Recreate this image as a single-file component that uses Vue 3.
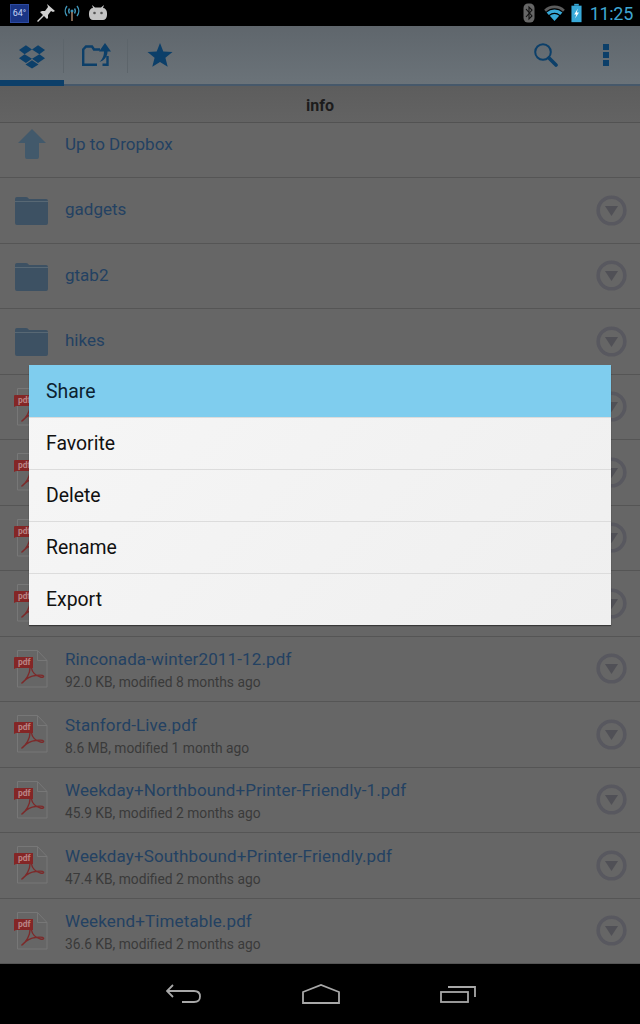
<script setup>
const folders = ['gadgets', 'gtab2', 'hikes']

// the first four pdf rows sit behind the menu, only their icon edge shows
const files = [
  { name: '', meta: '' },
  { name: '', meta: '' },
  { name: '', meta: '' },
  { name: '', meta: '' },
  { name: 'Rinconada-winter2011-12.pdf', meta: '92.0 KB, modified 8 months ago' },
  { name: 'Stanford-Live.pdf', meta: '8.6 MB, modified 1 month ago' },
  { name: 'Weekday+Northbound+Printer-Friendly-1.pdf', meta: '45.9 KB, modified 2 months ago' },
  { name: 'Weekday+Southbound+Printer-Friendly.pdf', meta: '47.4 KB, modified 2 months ago' },
  { name: 'Weekend+Timetable.pdf', meta: '36.6 KB, modified 2 months ago' }
]

const menu = ['Share', 'Favorite', 'Delete', 'Rename', 'Export']
</script>

<template>
  <div class="screen">
    <div class="status">
      <div class="temp">64°</div>
      <svg class="st-icon pin" width="20" height="20" viewBox="0 0 20 20">
        <path d="M11 1l8 7-2 1-2-1-3 4 0 3-1 1-3-3-6 6-1-1 6-6-3-3 2-1 3 0 3-4z" fill="#d0d0d0" />
      </svg>
      <svg class="st-icon" width="18" height="20" viewBox="0 0 18 20">
        <g fill="none" stroke="#3f93b5" stroke-width="1.4">
          <path d="M4 3a8 8 0 0 0 0 10" />
          <path d="M14 3a8 8 0 0 1 0 10" />
          <path d="M6.500 5.500a4.500 4.500 0 0 0 0 5" />
          <path d="M11.500 5.500a4.500 4.500 0 0 1 0 5" />
        </g>
        <circle cx="9" cy="8" r="1.500" fill="#3f93b5" />
        <path d="M9 9v9" stroke="#b08a70" stroke-width="1.400" />
      </svg>
      <svg class="st-icon" width="20" height="18" viewBox="0 0 20 18">
        <path d="M1 9c0-3 2-5 4-5L4 1l3 2.500h6L16 1l-1 3c2 0 4 2 4 5v2c0 3-2 5-4 5H5c-2 0-4-2-4-5z" fill="#c4c4c4" />
        <circle cx="6.500" cy="9" r="1.300" fill="#555" />
        <circle cx="13.500" cy="9" r="1.300" fill="#555" />
      </svg>
      <div class="status-gap"></div>
      <svg width="12" height="20" viewBox="0 0 12 20">
        <rect x="0.500" y="0.500" width="11" height="19" rx="4.500" fill="#666" />
        <path d="M3 6l6 7-3 3V4l3 3-6 7" fill="none" stroke="#111" stroke-width="1.100" />
      </svg>
      <svg class="wifi" width="21" height="16" viewBox="0 0 22 17">
        <path d="M0 5a16 16 0 0 1 22 0l-2 2.200a13 13 0 0 0-18 0z" fill="#5c5c5c" />
        <path d="M2.600 8a12.500 12.500 0 0 1 16.800 0L17 10.500a9 9 0 0 0-12 0z" fill="#38a9d8" />
        <path d="M6 11.500a7.500 7.500 0 0 1 10 0L11 17z" fill="#38a9d8" />
      </svg>
      <svg class="battery" width="11" height="20" viewBox="0 0 12 20">
        <rect x="3.500" y="0" width="5" height="2" fill="#38a9d8" />
        <rect x="0.500" y="2" width="11" height="18" fill="#38a9d8" />
        <path d="M7.500 5L3.500 11.500h2.300L4.500 16l4.200-6.500H6.300z" fill="#fff" />
      </svg>
      <span class="time">11:25</span>
    </div>

    <div class="actionbar">
      <div class="tab active">
        <svg width="26" height="25" viewBox="0 0 28 26" fill="#0c3f69">
          <path d="M7.500 1L0 6l6 4.500L14 5.500z" />
          <path d="M20.500 1L28 6l-6 4.500-8-5z" />
          <path d="M0 15l7.500 5L14 15.500l-8-5z" />
          <path d="M28 15l-7.500 5L14 15.500l8-5z" />
          <path d="M7 21.500l7-4.500 7 4.500L14 26z" />
        </svg>
      </div>
      <div class="tab">
        <svg width="30" height="24" viewBox="0 0 30 24" fill="none">
          <path d="M16 21.800H2.200V6.500L5 3.500h6l2 3h6M26.500 13v8.800h-5" stroke="#0c3f69" stroke-width="2.400" />
          <path d="M24 0l6 8.500h-3.500c0 5-3 9-8 10.500 2-2 4.500-5 4.500-10.500H18z" fill="#0c3f69" />
        </svg>
      </div>
      <div class="tab last">
        <svg width="26" height="24" viewBox="0 0 26 24">
          <path d="M13 0l3.300 8.400 9.200.6-7.100 5.800 2.300 9L13 19l-7.700 4.800 2.300-9L.5 9l9.200-.6z" fill="#0c3f69" />
        </svg>
      </div>
      <div class="bar-space"></div>
      <svg class="search" width="24" height="24" viewBox="0 0 24 24" fill="none">
        <circle cx="9" cy="9" r="7.800" stroke="#0c3f69" stroke-width="2" />
        <path d="M15 15l7 7" stroke="#0c3f69" stroke-width="3.600" stroke-linecap="round" />
      </svg>
      <div class="overflow"><i></i><i></i><i></i></div>
    </div>

    <div class="crumb">info</div>

    <div class="up-row">
      <svg class="up-icon" width="28" height="30" viewBox="0 0 28 30">
        <path d="M14 0l14 14h-7v14a2 2 0 0 1-2 2H9a2 2 0 0 1-2-2V14H0z" fill="#42596b" />
      </svg>
      <span class="name up-name">Up to Dropbox</span>
    </div>

    <div class="list">
      <div class="row" v-for="f in folders" :key="f">
        <svg class="file-icon" width="35" height="30" viewBox="0 0 35 30">
          <path d="M1 4q0-2 2-2h9q2 0 3 2h17q2 0 2 2v22q0 2-2 2H3q-2 0-2-2z" fill="#3d5163" />
          <path d="M1 6h33v1H1z" fill="#586874" />
        </svg>
        <div class="text single"><span class="name">{{ f }}</span></div>
        <svg class="more" width="31" height="31" viewBox="0 0 31 31">
          <circle cx="15.500" cy="15.500" r="13.300" fill="none" stroke="#58585f" stroke-width="3.600" />
          <path d="M9 11h13l-6.500 10z" fill="#505056" />
        </svg>
      </div>
      <div class="row" v-for="(f, i) in files" :key="i">
        <div class="pdf-icon">
          <svg width="34" height="38" viewBox="0 0 34 38">
            <path d="M3.500.5h20l9.500 10v26.500H3.500z" fill="none" stroke="#777" stroke-width="1" />
            <path d="M23.500.5v10H33" fill="none" stroke="#777" stroke-width="1" />
            <path d="M8 33c4-3 8-9 8-15 0-2 1-2 1.500 0 .5 4 4 8 9 9 2 .5 3.500 0 3-1-.5-1-4-1-8-.5-5 .5-9 3-12 6-1 1.500-2 1.500-1.500 1.500z" fill="none" stroke="#7c2a2a" stroke-width="1.400" />
            <path d="M0 8q0-1 1-1h18v11H2l-2 1z" fill="#842626" />
          </svg>
          <span class="pdf-label">pdf</span>
        </div>
        <div class="text">
          <span class="name file-name">{{ f.name }}</span>
          <span class="meta">{{ f.meta }}</span>
        </div>
        <svg class="more" width="31" height="31" viewBox="0 0 31 31">
          <circle cx="15.500" cy="15.500" r="13.300" fill="none" stroke="#58585f" stroke-width="3.600" />
          <path d="M9 11h13l-6.500 10z" fill="#505056" />
        </svg>
      </div>
    </div>

    <div class="navbar">
      <svg width="36" height="20" viewBox="0 0 36 20" fill="none" stroke="#a8a8a8" stroke-width="1.800">
        <path d="M7 1L1 7l6 6" />
        <path d="M1 7h27q6 0 6 5.500T28 18H16" />
      </svg>
      <svg width="38" height="20" viewBox="0 0 38 20" fill="none" stroke="#a8a8a8" stroke-width="1.800">
        <path d="M1 19V8l18-7 18 7v11z" />
      </svg>
      <svg width="36" height="18" viewBox="0 0 36 18" fill="none" stroke="#a8a8a8" stroke-width="1.800">
        <rect x="1" y="7" width="27" height="10" />
        <path d="M8 2h27v10" />
      </svg>
    </div>

    <div class="dialog">
      <div class="item" v-for="(m, i) in menu" :key="m" :class="{ selected: i === 0 }">{{ m }}</div>
    </div>
  </div>
</template>

<style scoped>
.screen {
  position: relative;
  width: 640px;
  height: 1024px;
  display: flex;
  flex-direction: column;
  overflow: hidden;
  background: #666;
  font-family: Roboto, "Liberation Sans", sans-serif;
}

.status {
  height: 26px;
  flex: none;
  display: flex;
  align-items: center;
  background: #000;
  padding: 0 7px 0 10px;
  box-sizing: border-box;
}
.temp {
  width: 19px;
  height: 19px;
  background: #1a3585;
  border: 1px solid #2c4aa0;
  box-sizing: border-box;
  color: #c4d6f5;
  font-size: 9px;
  line-height: 17px;
  text-align: center;
}
.st-icon {
  margin-left: 7px;
}
.status-gap {
  flex: 1;
}
.wifi {
  margin-left: 9px;
}
.battery {
  margin-left: 6px;
}
.time {
  margin-left: 8px;
  font-size: 18px;
  letter-spacing: -.3px;
  color: #3fa6d2;
}

.actionbar {
  height: 60px;
  flex: none;
  display: flex;
  align-items: center;
  box-sizing: border-box;
  background: linear-gradient(#5f666c, #6b7379);
  border-bottom: 2px solid #46586a;
}
.tab {
  width: 64px;
  height: 58px;
  box-sizing: border-box;
  display: flex;
  align-items: center;
  justify-content: center;
  position: relative;
}
.tab::after {
  content: "";
  position: absolute;
  right: 0;
  top: 13px;
  height: 34px;
  width: 1px;
  background: #5d656b;
}
.tab.last::after {
  display: none;
}
.tab.active {
  align-self: flex-start;
  height: 60px;
  padding-top: 6px;
  border-bottom: 6px solid #0c3f69;
}
.bar-space {
  flex: 1;
}
.search {
  margin-right: 45px;
}
.overflow {
  width: 6px;
  margin-right: 31px;
  display: flex;
  flex-direction: column;
  gap: 2px;
}
.overflow i {
  display: block;
  height: 6px;
  background: #0c3f69;
}

.crumb {
  height: 37px;
  flex: none;
  box-sizing: border-box;
  display: flex;
  align-items: center;
  justify-content: center;
  padding-top: 2px;
  font-size: 16px;
  font-weight: 700;
  color: #1c1c1c;
  background: linear-gradient(#5d5d5d, #636363);
  border-bottom: 1px solid #525252;
}

.up-row {
  height: 55px;
  flex: none;
  box-sizing: border-box;
  display: flex;
  align-items: center;
  padding-left: 18px;
  border-bottom: 1px solid #555;
}
.up-icon {
  margin-right: 19px;
  margin-top: -12px;
}
.up-name {
  margin-top: -13px;
}

.list {
  flex: 1;
  display: flex;
  flex-direction: column;
}
.row {
  flex: 1;
  min-height: 0;
  box-sizing: border-box;
  display: flex;
  align-items: center;
  padding: 0 14px;
  border-bottom: 1px solid #555;
}
.file-icon {
  margin-right: 16px;
  flex: none;
}
.pdf-icon {
  position: relative;
  width: 34px;
  height: 38px;
  margin-right: 17px;
  flex: none;
}
.pdf-icon svg {
  display: block;
}
.pdf-label {
  position: absolute;
  left: 4px;
  top: 7px;
  font-size: 8.500px;
  line-height: 11px;
  font-weight: 700;
  color: #b98484;
}
.text {
  flex: 1;
  min-width: 0;
  display: flex;
  flex-direction: column;
  gap: 5px;
  padding-top: 3px;
}
.text.single {
  padding-top: 0;
  padding-bottom: 2px;
}
.name {
  font-size: 17px;
  line-height: 20px;
  color: #234162;
}
.file-name {
  letter-spacing: .13px;
}
.meta {
  font-size: 13.8px;
  line-height: 17px;
  color: #3a3a3a;
}
.more {
  flex: none;
  margin-right: -1px;
}

.navbar {
  height: 60px;
  flex: none;
  background: #000;
  display: flex;
  align-items: center;
  justify-content: space-between;
  padding: 0 164px 0 166px;
  box-sizing: border-box;
}

.dialog {
  position: absolute;
  left: 29px;
  top: 365px;
  width: 582px;
  height: 260px;
  background: linear-gradient(135deg, #f6f6f6, #efefef);
  box-shadow: 0 1px 1px rgba(0, 0, 0, .45);
  display: flex;
  flex-direction: column;
}
.item {
  height: 52px;
  box-sizing: border-box;
  padding-left: 17px;
  display: flex;
  align-items: center;
  font-size: 19.4px;
  color: #111;
  border-top: 1px solid #dcdcdc;
}
.item:first-child {
  border-top: 0;
}
.item.selected {
  background: #7fcdee;
  color: #0d2230;
}
</style>
